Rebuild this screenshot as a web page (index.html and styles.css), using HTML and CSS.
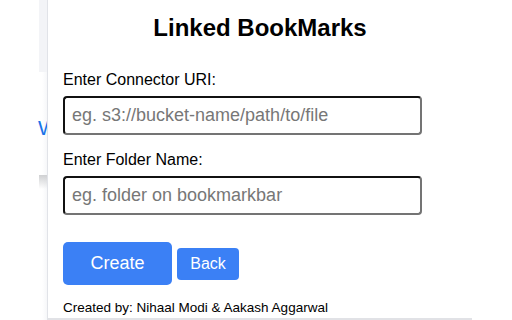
FILE: index.html
```html
<!DOCTYPE html>
<html>
<head>
<meta charset="utf-8">
<link rel="stylesheet" href="styles.css">
</head>
<body>
<div class="bg">
  <div class="bg-top"></div>
  <div class="bg-link">W</div>
  <div class="bg-shadow"></div>
</div>
<div class="popup">
  <h1 class="title">Linked BookMarks</h1>
  <div class="field first">
    <label class="label">Enter Connector URI:</label>
    <input class="input" type="text" placeholder="eg. s3://bucket-name/path/to/file">
  </div>
  <div class="field">
    <label class="label">Enter Folder Name:</label>
    <input class="input" type="text" placeholder="eg. folder on bookmarkbar">
  </div>
  <div class="actions">
    <button class="btn btn-create">Create</button>
    <button class="btn btn-back">Back</button>
  </div>
  <p class="footer">Created by: Nihaal Modi &amp; Aakash Aggarwal</p>
</div>
</body>
</html>
```
FILE: styles.css
```css
html, body {
  margin: 0;
  padding: 0;
  background: #ffffff;
}
body {
  display: flex;
  height: 320px;
  overflow: hidden;
  font-family: "Liberation Sans", Arial, sans-serif;
  color: #000;
}
.bg {
  width: 47px;
  flex: none;
  overflow: hidden;
  display: flex;
  flex-direction: column;
  background: linear-gradient(to right, #ffffff 0, #ffffff 42px, #f6f7f9 47px);
}
.bg-top {
  margin-left: 39px;
  height: 72px;
  background: #f3f4f7;
}
.bg-link {
  margin-top: 44px;
  padding-left: 38px;
  height: 24px;
  line-height: 24px;
  font-size: 21px;
  color: #1a73e8;
  white-space: nowrap;
}
.bg-shadow {
  margin-top: 35px;
  margin-left: 39px;
  height: 14px;
  background: linear-gradient(to bottom, #cfd0d2, rgba(255,255,255,0));
}
.popup {
  box-sizing: border-box;
  width: 425px;
  height: 320px;
  flex: none;
  border-left: 1px solid #e1e3e8;
  border-bottom: 2px solid #e1e2e6;
  background: #ffffff;
  padding: 14px 15px 0 15px;
  overflow: hidden;
}
.title {
  margin: 0;
  font-size: 24px;
  line-height: 28px;
  font-weight: bold;
  text-align: center;
}
.field {
  display: flex;
  flex-direction: column;
  align-items: flex-start;
  margin-top: 15px;
}
.field.first {
  margin-top: 28px;
}
.label {
  font-size: 16px;
  line-height: 20px;
  margin-bottom: 6px;
}
.input {
  box-sizing: border-box;
  width: 359px;
  height: 39px;
  margin: 0;
  padding: 0 7px;
  border: 2px solid;
  border-color: #111111 #747474 #747474 #111111;
  border-radius: 4px;
  font-family: "Liberation Sans", Arial, sans-serif;
  font-size: 18px;
  color: #000;
  outline: none;
}
.input::placeholder {
  color: #777777;
}
.actions {
  display: flex;
  align-items: center;
  gap: 5px;
  margin-top: 27px;
}
.btn {
  border: none;
  margin: 0;
  padding: 0;
  background: #3b80f5;
  color: #ffffff;
  font-family: "Liberation Sans", Arial, sans-serif;
  cursor: pointer;
}
.btn-create {
  width: 109px;
  height: 43px;
  border-radius: 5px;
  font-size: 18px;
}
.btn-back {
  width: 62px;
  height: 32px;
  border-radius: 4px;
  font-size: 16px;
}
.footer {
  margin: 15px 0 0 0;
  font-size: 13.5px;
  line-height: 16px;
}
```
